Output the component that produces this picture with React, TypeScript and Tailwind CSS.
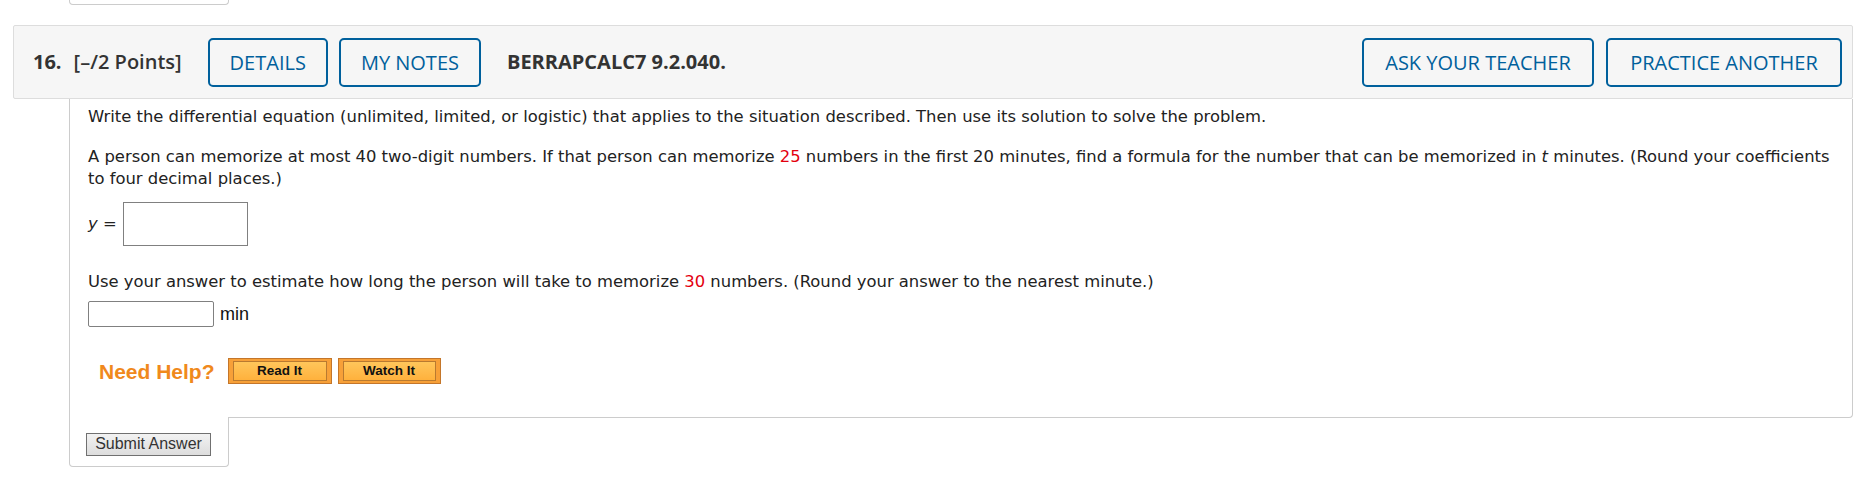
import React from "react";

const openSans = { fontFamily: '"Open Sans", "Liberation Sans", sans-serif' };
const verdana = { fontFamily: '"DejaVu Sans", Verdana, sans-serif' };
const arial = { fontFamily: '"Liberation Sans", Arial, sans-serif' };

function BlueButton({ children, className = "" }: { children: React.ReactNode; className?: string }) {
  return (
    <button
      className={
        "h-[49px] border-2 border-[#00609c] rounded-[5px] text-[#00609c] text-[20px] leading-[25px] bg-transparent " +
        className
      }
      style={openSans}
    >
      {children}
    </button>
  );
}

function OrangeButton({ children, className = "" }: { children: React.ReactNode; className?: string }) {
  return (
    <button
      className={
        "h-[26px] border border-[#c4762a] bg-[#f7a038] px-[4px] py-[2px] flex " + className
      }
      style={arial}
    >
      <span className="flex-1 flex items-center justify-center border border-[#b97a30] bg-gradient-to-b from-[#ffc65a] to-[#ffb13c] text-[13.5px] font-bold text-[#111] leading-none">
        {children}
      </span>
    </button>
  );
}

export default function App() {
  return (
    <div className="w-[1865px] h-[499px] bg-white overflow-hidden">
      <div className="ml-[69px] w-[160px] h-[5px] border-x border-b border-[#cccccc] rounded-b-[4px]" />

      <div
        className="mt-[20px] ml-[13px] mr-[12px] h-[74px] border border-[#dddddd] bg-[#f6f6f6] rounded-[2px] flex items-center pl-[19px] pr-[10px] text-[#333333]"
        style={openSans}
      >
        <span className="text-[20px] font-bold">16.</span>
        <span className="ml-[12px] text-[20px] font-semibold">[–/2 Points]</span>
        <BlueButton className="ml-[26px] px-[20px]">DETAILS</BlueButton>
        <BlueButton className="ml-[11px] px-[20px]">MY NOTES</BlueButton>
        <span className="ml-[26px] text-[20px] font-bold">BERRAPCALC7 9.2.040.</span>
        <div className="ml-auto flex gap-[12px]">
          <BlueButton className="w-[232px]">ASK YOUR TEACHER</BlueButton>
          <BlueButton className="w-[236px]">PRACTICE ANOTHER</BlueButton>
        </div>
      </div>

      <div className="ml-[69px] mr-[12px]">
        <div
          className="border-x border-b border-[#cccccc] rounded-br-[4px] pl-[18px] pr-[18px] pt-[7px] pb-[33px] text-[16.4px] leading-[22px] text-[#222222]"
          style={verdana}
        >
          <p className="whitespace-nowrap">
            Write the differential equation (unlimited, limited, or logistic) that applies to the situation described. Then use its solution to solve the problem.
          </p>
          <p className="mt-[18px] whitespace-nowrap">
            A person can memorize at most 40 two-digit numbers. If that person can memorize{" "}
            <span className="text-[#e3000f]">25</span> numbers in the first 20 minutes, find a formula for the number that can be memorized in{" "}
            <i>t</i> minutes. (Round your coefficients
            <br />
            to four decimal places.)
          </p>
          <div className="mt-[12px] flex items-center h-[44px]">
            <span>
              <i>y</i> =
            </span>
            <input className="ml-[6px] w-[125px] h-[44px] border border-[#808080] bg-white" />
          </div>
          <p className="mt-[25px] whitespace-nowrap">
            Use your answer to estimate how long the person will take to memorize{" "}
            <span className="text-[#e3000f]">30</span> numbers. (Round your answer to the nearest minute.)
          </p>
          <div className="mt-[8px] flex items-center h-[26px]">
            <input className="w-[126px] h-[26px] border border-[#808080] rounded-[2px] bg-white" />
            <span className="ml-[6px] text-[18px] leading-none text-[#111]" style={arial}>
              min
            </span>
          </div>
          <div className="mt-[31px] ml-[11px] flex items-center h-[26px]">
            <span className="text-[21px] font-bold text-[#f0891c] leading-none" style={arial}>
              Need Help?
            </span>
            <OrangeButton className="ml-[13px] w-[104px]">Read It</OrangeButton>
            <OrangeButton className="ml-[6px] w-[103px]">Watch It</OrangeButton>
          </div>
        </div>
        <div className="-mt-px w-[160px] h-[50px] bg-white border-x border-b border-[#cccccc] rounded-b-[4px] pl-[16px] pt-[14px]">
          <button
            className="w-[125px] h-[23px] border border-[#707070] bg-gradient-to-b from-[#f2f2f2] to-[#dddddd] text-[16px] leading-none text-[#333333]"
            style={arial}
          >
            Submit Answer
          </button>
        </div>
      </div>
    </div>
  );
}
